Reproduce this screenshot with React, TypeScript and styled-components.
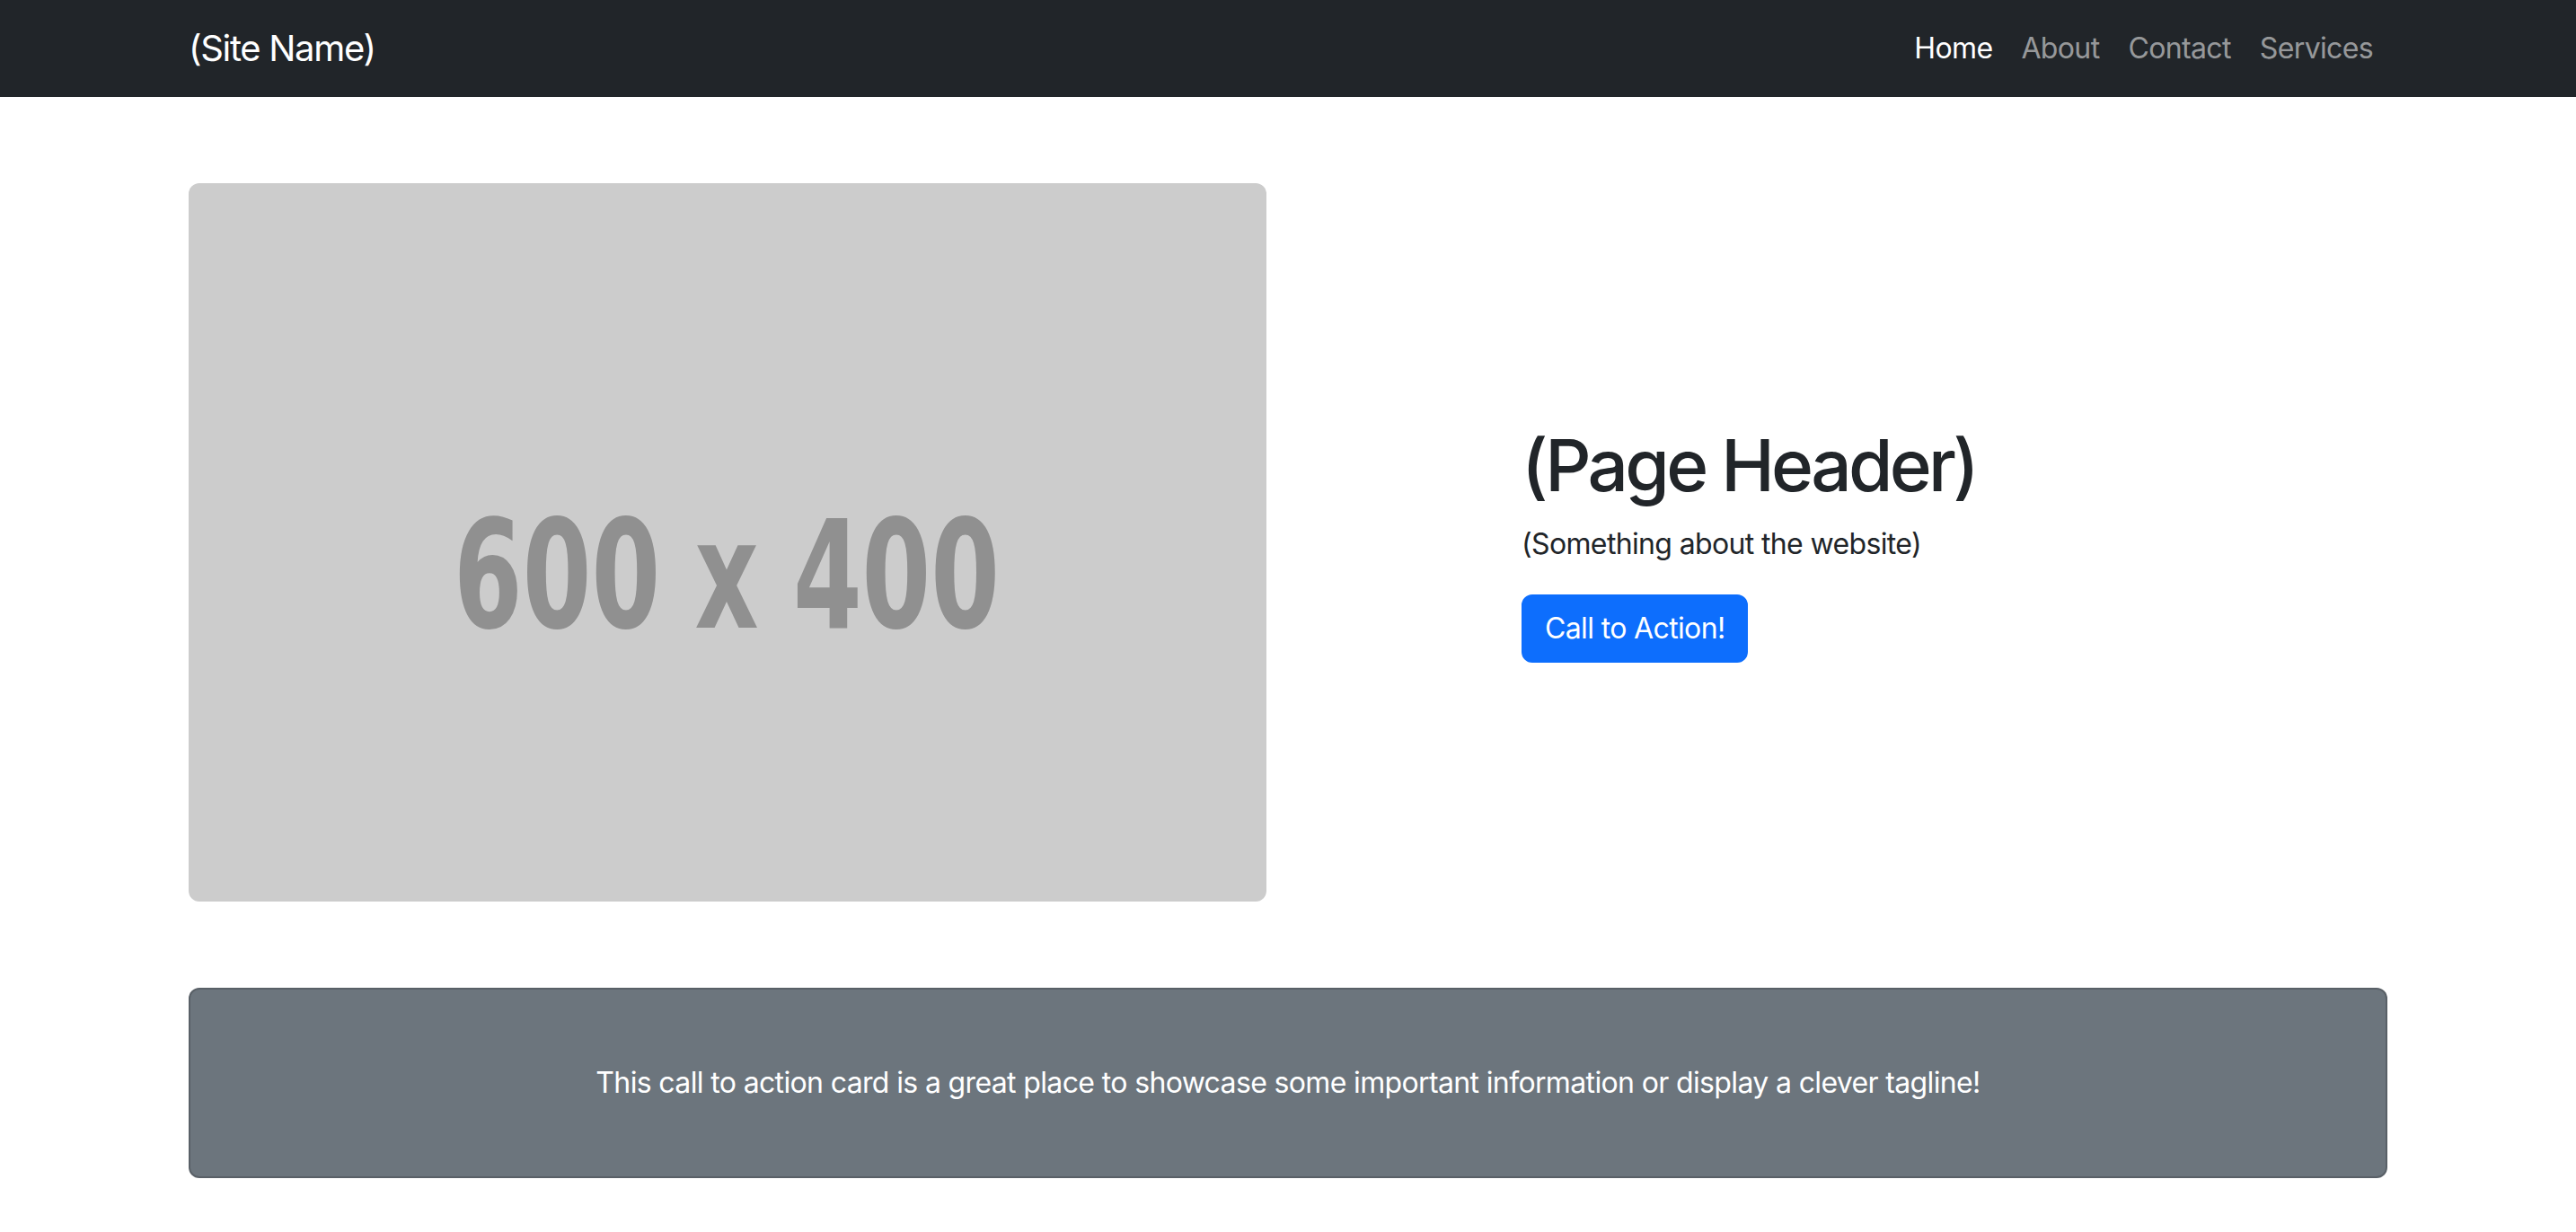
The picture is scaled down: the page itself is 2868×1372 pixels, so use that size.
import React from "react";
import styled, { createGlobalStyle } from "styled-components";

const GlobalStyle = createGlobalStyle`
  html, body {
    margin: 0;
    padding: 0;
    background: #ffffff;
  }
  body {
    font-family: Inter, "Noto Sans", "Liberation Sans", sans-serif;
    color: #212529;
    font-size: 32px;
    line-height: 1.5;
    letter-spacing: -0.02em;
    -webkit-font-smoothing: antialiased;
  }
  * { box-sizing: border-box; }
`;

const NavBar = styled.nav`
  background: #212529;
  height: 108px;
  display: flex;
  align-items: center;
`;

const Container = styled.div`
  width: 2640px;
  max-width: 100%;
  margin: 0 auto;
  padding: 0 96px;
`;

const NavInner = styled(Container)`
  display: flex;
  align-items: center;
  justify-content: space-between;
`;

const Brand = styled.a`
  color: #ffffff;
  font-size: 40px;
  line-height: 60px;
  letter-spacing: -0.033em;
  text-decoration: none;
`;

const NavList = styled.ul`
  list-style: none;
  margin: 0;
  padding: 0;
  display: flex;
`;

const NavLink = styled.a<{ $active?: boolean }>`
  display: block;
  padding: 16px;
  font-size: 32px;
  line-height: 48px;
  text-decoration: none;
  color: ${(p) => (p.$active ? "#ffffff" : "rgba(255, 255, 255, 0.55)")};
`;

const HeroRow = styled.section`
  display: grid;
  grid-template-columns: 1388px 964px;
  column-gap: 96px;
  align-items: center;
  margin: 96px 0;
`;

const Placeholder = styled.svg`
  display: block;
  width: 1200px;
  height: 800px;
  border-radius: 12px;
`;

const HeroText = styled.div`
  display: flex;
  flex-direction: column;
  align-items: flex-start;
`;

const Title = styled.h1`
  margin: 0 0 16px;
  font-size: 80px;
  line-height: 96px;
  font-weight: 500;
  letter-spacing: -0.046em;
  color: #212529;
`;

const Lead = styled.p`
  margin: 0 0 32px;
  font-size: 32px;
  line-height: 48px;
`;

const PrimaryButton = styled.a`
  display: inline-block;
  background: #0d6efd;
  border: 2px solid #0d6efd;
  color: #ffffff;
  font-size: 32px;
  line-height: 48px;
  padding: 12px 24px;
  border-radius: 12px;
  text-decoration: none;
`;

const CtaCard = styled.div`
  margin: 96px 0 0;
  background: #6c757d;
  border: 2px solid rgba(0, 0, 0, 0.175);
  border-radius: 12px;
  padding: 48px 0;
  text-align: center;
`;

const CardBody = styled.div`
  padding: 32px;
`;

const CardText = styled.p`
  margin: 0;
  color: #ffffff;
  font-size: 32px;
  line-height: 48px;
`;

export default function App() {
  return (
    <>
      <GlobalStyle />
      <NavBar>
        <NavInner>
          <Brand href="#">(Site Name)</Brand>
          <NavList>
            <li><NavLink $active href="#">Home</NavLink></li>
            <li><NavLink href="#">About</NavLink></li>
            <li><NavLink href="#">Contact</NavLink></li>
            <li><NavLink href="#">Services</NavLink></li>
          </NavList>
        </NavInner>
      </NavBar>
      <Container>
        <HeroRow>
          <div>
            <Placeholder viewBox="0 0 1200 800" xmlns="http://www.w3.org/2000/svg">
              <rect width="1200" height="800" fill="#cccccc" />
              <text
                x="295"
                y="495"
                fill="#909090"
                fontFamily="'DejaVu Sans Condensed', 'DejaVu Sans', sans-serif"
                fontWeight="bold"
                fontSize="168"
                letterSpacing="0"
                textLength="608"
                lengthAdjust="spacingAndGlyphs"
              >
                600 x 400
              </text>
            </Placeholder>
          </div>
          <HeroText>
            <Title>(Page Header)</Title>
            <Lead>(Something about the website)</Lead>
            <PrimaryButton href="#">Call to Action!</PrimaryButton>
          </HeroText>
        </HeroRow>
        <CtaCard>
          <CardBody>
            <CardText>
              This call to action card is a great place to showcase some important information or display a clever tagline!
            </CardText>
          </CardBody>
        </CtaCard>
      </Container>
    </>
  );
}
